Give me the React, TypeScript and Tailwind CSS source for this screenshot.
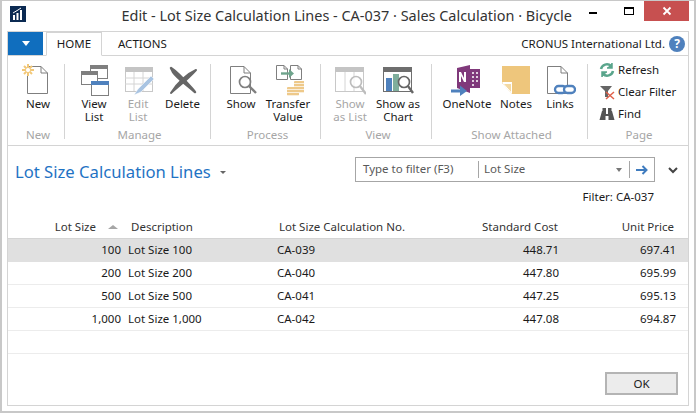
import React from "react";

const font = { fontFamily: '"Noto Sans", sans-serif' };

function Box({ children }: { children: React.ReactNode }) {
  return (
    <svg width="32" height="32" viewBox="0 0 32 32" className="block mx-auto" fill="none">
      {children}
    </svg>
  );
}

const Page = ({ x = 0, y = 0, w = 20, h = 28, f = 7, c = "#7f7f7f" }) => (
  <path d={`M${x + .5} ${y + .5}H${x + w - f}L${x + w - .5} ${y + f}V${y + h - .5}H${x + .5}ZM${x + w - f} ${y + .5}V${y + f}H${x + w - .5}`} stroke={c} fill="#fff" />
);

const NewIcon = () => (
  <Box>
    <Page x={5} y={2} w={21} h={28} />
    <g stroke="#f2c879" strokeWidth="2">
      <path d="M6 0V12M0 6H12M2 2L10 10M10 2L2 10" />
    </g>
    <circle cx="6" cy="6" r="2.6" fill="#fff" stroke="#f2c879" />
  </Box>
);
const Win = ({ x, y, w, h, c }: { x: number; y: number; w: number; h: number; c: string }) => (
  <g>
    <rect x={x + .5} y={y + .5} width={w - 1} height={h - 1} fill="#fff" stroke="#7f7f7f" />
    <rect x={x} y={y} width={w} height={4} fill={c} />
  </g>
);
const ViewListIcon = () => (
  <Box>
    <Win x={12} y={1} w={18} h={14} c="#7f7f7f" />
    <Win x={3} y={7} w={17} h={14} c="#7f7f7f" />
    <rect x={13.5} y={17.5} width={17} height={14} fill="#fff" stroke="#7f7f7f" strokeWidth="1" />
    <rect x={13} y={17} width={18} height={4} fill="#4f81bd" />
  </Box>
);
const EditListIcon = () => (
  <Box>
    <rect x="3.500" y="3.500" width="27" height="24" fill="#fff" stroke="#c8c8c8" />
    <rect x="3" y="3" width="28" height="5" fill="#c4c4c4" />
    <path d="M3 14H31M3 20H31M12 8V27M21 8V27" stroke="#d4d4d4" />
    <path d="M12 31L16 25L29 12L32 15L19 28Z" fill="#a9c4e2" stroke="#fff" strokeWidth=".5" />
  </Box>
);
const DeleteIcon = () => (
  <Box>
    <path d="M4 4C12 9 20 19 28 28C20 21 10 14 6 8Z" fill="#666" stroke="#666" strokeWidth="2.500" strokeLinejoin="round" />
    <path d="M29 6C20 10 10 19 4 29C12 22 22 14 29 6Z" fill="#666" stroke="#666" strokeWidth="2" strokeLinejoin="round" />
  </Box>
);
const Mag = ({ cx, cy, r = 5.5, c = "#7f7f7f", x2, y2 }: { cx: number; cy: number; r?: number; c?: string; x2: number; y2: number }) => (
  <g>
    <circle cx={cx} cy={cy} r={r} fill="#fff" fillOpacity=".7" stroke={c} strokeWidth="1.7" />
    <path d={`M${cx + r * .7} ${cy + r * .7}L${x2} ${y2}`} stroke={c} strokeWidth="2.400" />
  </g>
);
const ShowIcon = () => (
  <Box>
    <Page x={5} y={2} w={21} h={28} />
    <Mag cx={20} cy={18} x2={31} y2={29} />
  </Box>
);
const Coin = ({ x, y, n = 3 }: { x: number; y: number; n?: number }) => (
  <g>
    <rect x={x} y={y} width={12} height={n * 3} rx="1" fill="#eec98a" />
    {Array.from({ length: n }).map((_, i) => (
      <path key={i} d={`M${x} ${y + 2.5 + i * 3}H${x + 12}`} stroke="#fff" strokeWidth=".7" />
    ))}
  </g>
);
const TransferIcon = () => (
  <Box>
    <Page x={4} y={1} w={12} h={15} f={4} />
    <Page x={18} y={1} w={12} h={15} f={4} />
    <path d="M9 9.500H18" stroke="#6ea48c" strokeWidth="2.400" />
    <path d="M17 5L22 9.500L17 14Z" fill="#6ea48c" />
    <Coin x={22} y={17} n={4} />
    <Coin x={15} y={23} n={3} />
  </Box>
);
const ShowListIcon = () => (
  <Box>
    <rect x="1.500" y="3.500" width="28" height="24" fill="#fff" stroke="#c8c8c8" />
    <rect x="1" y="3" width="29" height="5" fill="#c4c4c4" />
    <path d="M11 8V27M20 8V27" stroke="#d4d4d4" />
    <Mag cx={22} cy={18} c="#bdbdbd" x2={32} y2={30} />
  </Box>
);
const ChartIcon = () => (
  <Box>
    <rect x="1.500" y="3.500" width="28" height="24" fill="#fff" stroke="#6e6e6e" />
    <rect x="1" y="3" width="29" height="5" fill="#6e6e6e" />
    <rect x="4" y="14" width="6" height="13" fill="#4f81bd" />
    <rect x="11" y="10" width="6" height="17" fill="#7fae9c" />
    <Mag cx={22} cy={18} c="#666" x2={31} y2={29} />
  </Box>
);
const OneNoteIcon = () => (
  <Box>
    <path d="M6 4L19 1V29L6 24Z" fill="#80397b" />
    <path d="M19 5H29V24H19Z" fill="#80397b" />
    <path d="M21 9H23M25 9H27M21 13H23M25 13H27M21 17H23M25 17H27M21 21H23" stroke="#fff" strokeWidth="1.500" />
    <path d="M8 18V8H10L13 14V8H15V18H13L10 12V18Z" fill="#fff" />
    <path d="M0 27H11" stroke="#4f81bd" strokeWidth="3" />
    <path d="M9 21.500L16 27L9 32Z" fill="#4f81bd" />
  </Box>
);
const NotesIcon = () => (
  <Box>
    <path d="M2 2H30V30H12L2 19Z" fill="#eec67c" />
    <path d="M2 18H12V30Z" fill="#fff" />
    <path d="M3 19.500H11.500V29Z" stroke="#fff" fill="#f3d9a3" />
  </Box>
);
const LinksIcon = () => (
  <Box>
    <Page x={3} y={2} w={21} h={28} />
    <g stroke="#4f81bd" strokeWidth="2.300" fill="#fff">
      <rect x="11" y="22" width="11" height="7" rx="3.500" />
      <rect x="20" y="22" width="11" height="7" rx="3.500" />
    </g>
  </Box>
);

function Big({ label, w, icon, disabled }: { label: string[]; w: number; icon: React.ReactNode; disabled?: boolean }) {
  return (
    <div style={{ width: w }} className={`shrink-0 flex flex-col items-center ${disabled ? "text-[#a6a6a6]" : "text-[#1a1a1a]"}`}>
      {icon}
      <div className="mt-[1px] text-center leading-[13px]">
        {label.map((l) => (
          <div key={l} className="whitespace-nowrap">{l}</div>
        ))}
      </div>
    </div>
  );
}

function Group({ title, width, pad, children, last }: { title: string; width: number; pad: number; children: React.ReactNode; last?: boolean }) {
  return (
    <div style={{ width }} className={`shrink-0 flex flex-col h-[75px] ${last ? "" : "border-r border-[#d4d4d4]"}`}>
      <div style={{ paddingLeft: pad }} className="flex flex-1">{children}</div>
      <div className="text-center text-[#a6a6a6] leading-[14px] -mb-[3px] pl-[4px]">{title}</div>
    </div>
  );
}

function Small({ icon, label }: { icon: React.ReactNode; label: string }) {
  return (
    <div className="flex items-center h-[22px] gap-[3px] text-[#1a1a1a] whitespace-nowrap">
      <svg width="16" height="16" viewBox="0 0 16 16" fill="none" className="shrink-0">{icon}</svg>
      {label}
    </div>
  );
}

const rows = [
  ["100", "Lot Size 100", "CA-039", "448.71", "697.41"],
  ["200", "Lot Size 200", "CA-040", "447.80", "695.99"],
  ["500", "Lot Size 500", "CA-041", "447.25", "695.13"],
  ["1,000", "Lot Size 1,000", "CA-042", "447.08", "694.87"],
];

const cols = "grid grid-cols-[113px_145px_188px_105px_1fr] h-[23px] items-center";

export default function App() {
  return (
    <div style={font} className="w-[696px] h-[413px] bg-white border-2 border-[#c8c8c8] border-t-[1px] flex flex-col text-[11.5px] overflow-hidden">
      <div className="grid grid-cols-[1fr_auto_1fr] h-[30px] shrink-0">
        <div className="pl-[8px] pt-[5px]">
          <svg width="16" height="16" viewBox="0 0 16 16">
            <rect width="16" height="16" fill="#0b2a52" />
            <path d="M3 9H5V14H3ZM6.500 7H8.500V14H6.500ZM10 4H12V14H10Z" fill="#fff" />
            <path d="M3 7L8 4L11 2" stroke="#fff" strokeWidth="1" fill="none" />
          </svg>
        </div>
        <div className="text-[14.45px] leading-[30px] text-[#333] whitespace-nowrap">Edit - Lot Size Calculation Lines - CA-037 · Sales Calculation · Bicycle</div>
        <div className="flex justify-end pr-[5px] items-start">
          <div className="w-[42px] h-[20px] flex items-center justify-center"><div className="w-[8px] h-[2px] bg-black mt-[3px]" /></div>
          <div className="w-[30px] h-[20px] flex items-center justify-center"><div className="w-[10px] h-[8px] border border-black border-t-2" /></div>
          <div className="w-[45px] h-[20px] bg-[#c75050] text-white flex items-center justify-center">
            <svg width="10" height="10" viewBox="0 0 10 10"><path d="M1.500 1.500L8.500 8.500M8.500 1.500L1.500 8.500" stroke="#fff" strokeWidth="1.800" /></svg>
          </div>
        </div>
      </div>

      <div className="mx-[5px] mb-[5px] flex-1 flex flex-col border border-[#d4d4d4] min-h-0">
        <div className="flex h-[24px] shrink-0 border-b border-[#d4d4d4] items-end">
          <div className="w-[35px] h-[23px] bg-[#106ebe] flex items-center justify-center self-start">
            <div className="w-0 h-0 border-x-[4px] border-x-transparent border-t-[5px] border-t-white" />
          </div>
          <div className="ml-[3px] w-[56px] h-[24px] bg-white border border-[#d4d4d4] border-b-white -mb-px flex items-center justify-center text-[#1a1a1a]">HOME</div>
          <div className="ml-[16px] h-[23px] flex items-center text-[#1a1a1a]">ACTIONS</div>
          <div className="ml-auto h-[23px] flex items-center text-[#1a1a1a] pr-[4px]">CRONUS International Ltd.</div>
          <div className="h-[23px] pr-[3px] flex items-center">
            <div className="w-[16px] h-[16px] rounded-full bg-[#4f81bd] text-white font-bold text-[12px] leading-[16px] text-center">?</div>
          </div>
        </div>

        <div className="h-[90px] flex shrink-0 pt-[8px] border-b border-[#d4d4d4]">
          <Group title="New" width={57} pad={5}>
            <Big label={["New"]} w={50} icon={<NewIcon />} />
          </Group>
          <Group title="Manage" width={146} pad={7}>
            <Big label={["View", "List"]} w={44} icon={<ViewListIcon />} />
            <Big label={["Edit", "List"]} w={44} icon={<EditListIcon />} disabled />
            <Big label={["Delete"]} w={45} icon={<DeleteIcon />} />
          </Group>
          <Group title="Process" width={110} pad={8}>
            <Big label={["Show"]} w={44} icon={<ShowIcon />} />
            <Big label={["Transfer", "Value"]} w={50} icon={<TransferIcon />} />
          </Group>
          <Group title="View" width={111} pad={7}>
            <Big label={["Show", "as List"]} w={44} icon={<ShowListIcon />} disabled />
            <Big label={["Show as", "Chart"]} w={52} icon={<ChartIcon />} />
          </Group>
          <Group title="Show Attached" width={156} pad={7}>
            <Big label={["OneNote"]} w={56} icon={<OneNoteIcon />} />
            <Big label={["Notes"]} w={42} icon={<NotesIcon />} />
            <Big label={["Links"]} w={46} icon={<LinksIcon />} />
          </Group>
          <Group title="Page" width={98} pad={11} last>
            <div className="flex flex-col -mt-[5px]">
              <Small label="Refresh" icon={<g stroke="#5aa58c" strokeWidth="2.500"><path d="M2 7A6 6 0 0 1 12 4" /><path d="M14 9A6 6 0 0 1 4 12" /><path d="M13 1V6H8M3 15V10H8" strokeWidth="1.500" fill="#5aa58c" /></g>} />
              <Small label="Clear Filter" icon={<g><path d="M1 2H13L9 7V13H6V7Z" fill="#666" /><path d="M7 8L15 15M15 8L7 15" stroke="#e0604a" strokeWidth="1.500" /></g>} />
              <Small label="Find" icon={<g fill="#555"><rect x="3.500" y="2" width="3.500" height="4" /><rect x="9" y="2" width="3.500" height="4" /><path d="M3 5H7V8H9V5H13L15.500 14H9.500V10H6.500V14H.5Z" /></g>} />
            </div>
          </Group>
        </div>

        <div className="flex-1 flex flex-col min-h-0 relative">
          <div className="flex h-[43px] shrink-0 pt-[11px]">
            <div className="pl-[7px] text-[16.65px] leading-[30px] text-[#1f73c4] flex items-center h-[30px] whitespace-nowrap">
              Lot Size Calculation Lines
              <div className="ml-[9px] w-0 h-0 border-x-[3px] border-x-transparent border-t-[3px] border-t-[#666]" />
            </div>
            <div className="ml-auto mr-[33px] w-[300px] h-[25px] border border-[#a6a6a6] flex items-center text-[#595959]">
              <div className="w-[123px] pl-[7px] h-[17px] leading-[15px] border-r border-[#a6a6a6] whitespace-nowrap">Type to filter (F3)</div>
              <div className="pl-[5px] flex-1 h-[17px] leading-[15px]">Lot Size</div>
              <div className="w-0 h-0 border-x-[3px] border-x-transparent border-t-[4px] border-t-[#777] mr-[7px]" />
              <div className="w-[25px] h-[17px] border-l border-[#a6a6a6] flex items-center justify-center">
                <svg width="12" height="10" viewBox="0 0 12 10" fill="none"><path d="M0 5H10M6.500 1L10.500 5L6.500 9" stroke="#3f7cbf" strokeWidth="2" /></svg>
              </div>
            </div>
            <svg width="10" height="7" viewBox="0 0 10 7" fill="none" className="absolute right-[10px] top-[21px]"><path d="M1 1L5 5L9 1" stroke="#444" strokeWidth="2" /></svg>
          </div>
          <div className="text-right pr-[34px] leading-[16px] h-[26px] text-[#1a1a1a] shrink-0">Filter: CA-037</div>
          <div className={`${cols} !h-[24px] border-b border-[#d4d4d4] text-[#333] shrink-0`}>
            <div className="flex justify-end items-center">
              <span className="mr-[12px]">Lot Size</span>
              <div className="w-0 h-0 border-x-[5px] border-x-transparent border-b-[4px] border-b-[#a6a6a6] mr-[3px]" />
            </div>
            <div className="pl-[10px]">Description</div>
            <div className="pl-[13px]">Lot Size Calculation No.</div>
            <div className="text-right pr-[1px]">Standard Cost</div>
            <div className="text-right pr-[14px]">Unit Price</div>
          </div>
          {rows.map((r, i) => (
            <div key={r[0]} className={`${cols} shrink-0 border-b text-[#1a1a1a] ${i === 0 ? "bg-[#e0e0e0] border-[#e0e0e0]" : "border-[#ececec]"}`}>
              <div className="text-right">{r[0]}</div>
              <div className="pl-[7px]">{r[1]}</div>
              <div className="pl-[11px]">{r[2]}</div>
              <div className="text-right">{r[3]}</div>
              <div className="text-right pr-[12px]">{r[4]}</div>
            </div>
          ))}
          <div className={`${cols} shrink-0 border-b border-[#ececec]`} />
          <div className="flex justify-end pt-[18px] pr-[10px]">
            <div className="w-[73px] h-[23px] border-2 border-[#b4b4b4] bg-[#ececec] text-[#1a1a1a] flex items-center justify-center">OK</div>
          </div>
        </div>
      </div>
    </div>
  );
}
